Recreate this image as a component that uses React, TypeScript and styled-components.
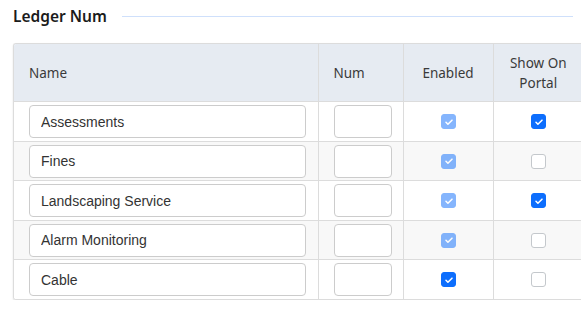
import React from 'react';
import styled, {createGlobalStyle} from "styled-components";

const GlobalStyle = createGlobalStyle`
    body {
        margin: 0;
        background: #fff;
        overflow: hidden;
        font-family: "Noto Sans", "Open Sans", sans-serif;
    }
`

type ledgerRow = {
    name: string
    enabled: boolean
    enabledLocked: boolean
    portal: boolean
}

const rows: ledgerRow[] = [
    {name: 'Assessments', enabled: true, enabledLocked: true, portal: true},
    {name: 'Fines', enabled: true, enabledLocked: true, portal: false},
    {name: 'Landscaping Service', enabled: true, enabledLocked: true, portal: true},
    {name: 'Alarm Monitoring', enabled: true, enabledLocked: true, portal: false},
    {name: 'Cable', enabled: true, enabledLocked: false, portal: false},
]

type checkType = {
    checked: boolean
    disabled?: boolean
}

const Check = (props: checkType) => {
    return (
        <CheckBox checked={props.checked} disabled={props.disabled}>
            {props.checked && (
                <svg width="12" height="12" viewBox="0 0 20 20">
                    <path d="M5 10.5l3.2 3.2L15 7" fill="none" stroke="#fff" strokeWidth="2.6"
                          strokeLinecap="round" strokeLinejoin="round"/>
                </svg>
            )}
        </CheckBox>
    )
}

export default function App() {
    return (
        <Page>
            <GlobalStyle/>
            <TitleRow>
                <Title>Ledger Num</Title>
                <TitleLine/>
            </TitleRow>
            <TableWrapper>
                <Table>
                    <colgroup>
                        <col style={{width: 304}}/>
                        <col style={{width: 85}}/>
                        <col style={{width: 90}}/>
                        <col style={{width: 90}}/>
                    </colgroup>
                    <thead>
                    <tr>
                        <Th>Name</Th>
                        <Th>Num</Th>
                        <Th center>Enabled</Th>
                        <Th center>Show On<br/>Portal</Th>
                    </tr>
                    </thead>
                    <tbody>
                    {rows.map((r, i) => (
                        <Tr key={r.name} striped={i % 2 === 1}>
                            <Td><NameInput defaultValue={r.name}/></Td>
                            <Td><NumInput/></Td>
                            <Td center><Check checked={r.enabled} disabled={r.enabledLocked}/></Td>
                            <Td center><Check checked={r.portal}/></Td>
                        </Tr>
                    ))}
                    </tbody>
                </Table>
            </TableWrapper>
        </Page>
    )
}

const Page = styled.div`
    padding: 5px 0 0 13px;
    width: 600px;
`
const TitleRow = styled.div`
    display: flex;
    align-items: center;
    gap: 15px;
    width: 560px;
    height: 22px;
`
const Title = styled.h2`
    margin: 0;
    font-weight: 600;
    font-size: 15.5px;
    color: #1b1b1b;
    white-space: nowrap;
`
const TitleLine = styled.div`
    flex: 1;
    height: 1px;
    background: #cfe0fb;
`
const TableWrapper = styled.div`
    margin-top: 16px;
    width: 569px;
    border: 1px solid #dcdcdc;
    border-right: none;
    border-radius: 3px 0 0 3px;
    box-shadow: 0 1px 2px rgba(0, 0, 0, 0.12);
    overflow: hidden;
`
const Table = styled.table`
    border-collapse: collapse;
    table-layout: fixed;
    width: 569px;
`
const Th = styled.th<{ center?: boolean }>`
    background: #e6ebf2;
    height: 57px;
    padding: 0 15px;
    text-align: ${p => p.center ? 'center' : 'left'};
    font-weight: 400;
    font-size: 13.5px;
    line-height: 20px;
    color: #3a3a3a;
    border-left: 1px solid #dcdcdc;
    border-bottom: 1px solid #dcdcdc;

    &:first-child {
        border-left: none;
    }
`
const Tr = styled.tr<{ striped?: boolean }>`
    background: ${p => p.striped ? '#f8f8f8' : '#fff'};
    border-top: 1px solid #dcdcdc;

    &:first-child {
        border-top: none;
    }
`
const Td = styled.td<{ center?: boolean }>`
    padding: 3px 14px 2.6px 15px;
    height: 33px;
    text-align: ${p => p.center ? 'center' : 'left'};
    vertical-align: middle;
    border-left: 1px solid #dcdcdc;
    line-height: 0;

    &:first-child {
        border-left: none;
    }
`
const NameInput = styled.input`
    box-sizing: border-box;
    width: 277px;
    height: 33px;
    padding: 0 11px;
    border: 1px solid #cccccc;
    border-radius: 4px;
    background: #fff;
    font-family: "Liberation Sans", Arial, sans-serif;
    font-size: 14px;
    color: #333;
    outline: none;
`
const NumInput = styled.input`
    box-sizing: border-box;
    width: 58px;
    height: 33px;
    border: 1px solid #cccccc;
    border-radius: 4px;
    background: #fff;
    outline: none;
`
const CheckBox = styled.span<{ checked: boolean, disabled?: boolean }>`
    display: inline-flex;
    align-items: center;
    justify-content: center;
    box-sizing: border-box;
    width: 15px;
    height: 15px;
    border-radius: 3px;
    vertical-align: middle;
    background: ${p => p.checked ? '#0d6efd' : '#fff'};
    border: 1px solid ${p => p.checked ? '#0d6efd' : '#c4c8cc'};
    opacity: ${p => p.disabled ? 0.5 : 1};
`
